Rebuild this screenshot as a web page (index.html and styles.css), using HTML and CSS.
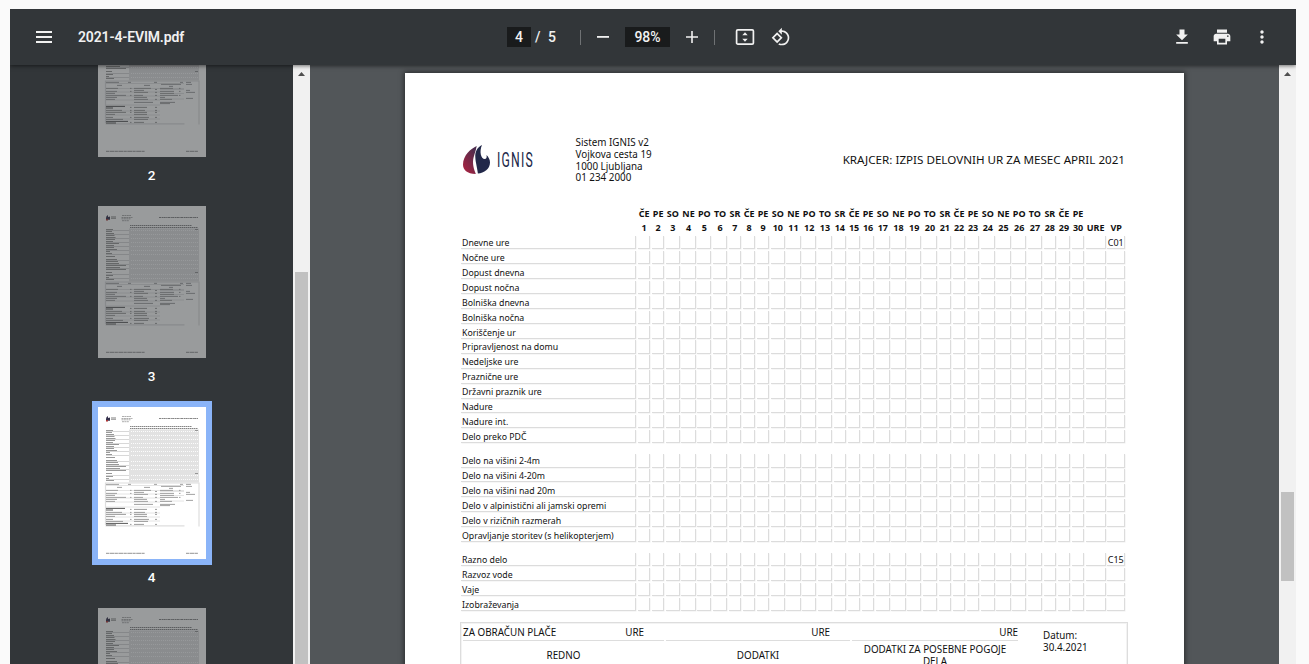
FILE: index.html
```html
<!DOCTYPE html>
<html lang="sl">
<head>
<meta charset="utf-8">
<title>2021-4-EVIM.pdf</title>
<link rel="stylesheet" href="styles.css">
</head>
<body>
<svg class="defs" width="0" height="0">
  <symbol id="mini" viewBox="0 0 108 152">
    <rect width="108" height="152" fill="#fff"/>
    <path d="M8 12q0-2 2-3v2l2-.5v3.2H8z" fill="#35304c"/>
    <path d="M8 13h2v1.500H8z" fill="#a33"/>
    <path d="M13 10.800h5M13 12.400h5" stroke="#aaa" stroke-width="1.200"/>
    <path d="M24 9.500h9M23.500 11.500h11M23.500 12.800h9M24 14.700h7" stroke="#999" stroke-width=".8" stroke-dasharray="2 .4"/>
    <path d="M61 11.500h39" stroke="#777" stroke-width=".9" stroke-dasharray="2.300 .5 1.300 .3"/>
    <path d="M32 19.500h62M32 21.500h68" stroke="#777" stroke-width=".9" stroke-dasharray="1.500 .5"/>
    <rect x="31" y="22.500" width="70" height="53" fill="#e2e2e2"/>
    <path d="M33 24.500h67M33 28.500h67M33 32.500h67M33 36.500h67M33 40.500h67M33 44.500h67M33 48.500h67M33 54.500h67M33 58.500h67M33 62.500h67M33 68.500h67M33 72.500h67" stroke="#fff" stroke-width=".9" stroke-dasharray="1 1"/>
    <path d="M8 24.500h23M8 28.500h23M8 32.500h23M8 36.500h23M8 40.500h23M8 44.500h23M8 48.500h23M8 54.500h23M8 58.500h23M8 62.500h23M8 68.500h23M8 72.500h23" stroke="#d8d8d8" stroke-width="1"/>
    <path d="M8 23.500h7M8 25.500h6M8 27.500h8M8 29.500h8.500M8 31.500h9.500M8 33.500h9M8 35.500h7M8 37.500h13M8 39.500h8M8 41.500h8M8 43.500h11M8 45.500h4M8 47.500h6M8 50.500h9M8 53.500h11M8 55.500h12M8 57.500h13M8 59.500h20M8 61.500h14M8 63.500h20M8 66.500h6M8 69.500h7M8 71.500h3M8 73.500h8M97 23.500h3M97 66.500h3" stroke="#8c8c8c" stroke-width=".9"/>
    <path d="M7.500 118V76h93.500v43.500M7.500 118.900h79" fill="none" stroke="#dedede" stroke-width="1.200"/>
    <path d="M8 78.500h78M8 83.500h78M8 87h54M8 91h54M8 95h54M8 100h54M8 106h54M8 110h54M8 114h54M62 84.500h24M62 88.500h24M62 94h24" stroke="#e4e4e4"/>
    <path d="M8 77.400h13M30 77.400h3M56 77.400h3M82 77.400h3M88 77.400h5M88 79.400h6M19 80.400h5M46 80.400h6M63 79.400h20M71 81.400h4M88 85.400h4M88 87.400h9M88 93.400h7" stroke="#999" stroke-width=".9"/>
    <path d="M8 83.400h12M8 86.400h11M8 88.400h9M8 90.400h20M8 92.400h11M8 94.400h9M36 83.400h17M36 85.400h10M36 87.400h14M36 90.400h9M36 92.400h13M36 94.400h14M36 97.400h19M62 83.400h13M62 86.400h14M62 88.400h14M62 90.400h18M62 92.400h5M62 94.400h12M62 97.400h15M62 98.600h10M32 83.400h1.500M32 86.400h1.500M32 90.400h1.500M57 84.500h2M57 87.400h2M57 90.400h2M57 94.400h2M81 83.400h1.500M81 86.400h1.500M81 90.400h1.500" stroke="#969696" stroke-width=".9"/>
    <path d="M8 101.400h19M8 103h7M8 116.400h22M8 118h10" stroke="#444" stroke-width=".9"/>
    <path d="M8 105.400h16M8 107.400h20M8 109.400h9M8 112.400h7M8 114.400h17M36 102.400h13M36 105.400h11M36 107.400h13M36 109.400h13M36 112.400h15M36 114.400h14M36 117.400h10M32 102.400h1.500M32 105.400h1.500M32 107.400h1.500M32 112.400h1.500M32 117.400h1.500M57 102.400h2M57 105.400h2M57 107.400h2M57 112.400h2M57 117.400h2" stroke="#909090" stroke-width=".9"/>
    <path d="M8 146.300h39M88 146.300h12" stroke="#888" stroke-width=".9" stroke-dasharray="3 .5 5 .4"/>
  </symbol>
</svg>
<div class="viewer">
  <header class="toolbar">
    <div class="tool-left">
      <svg class="icon-menu" width="16" height="12"><path d="M0 0h16v2H0zM0 5h16v2H0zM0 10h16v2H0z"/></svg>
      <span class="filename">2021-4-EVIM.pdf</span>
    </div>
    <div class="tool-center">
      <span class="field page-field">4</span>
      <span class="slash">/</span>
      <span class="total">5</span>
      <span class="divider first"></span>
      <svg class="icon" viewBox="0 0 20 20"><path d="M4 9h12v1.800H4z"/></svg>
      <span class="field zoom-field">98%</span>
      <svg class="icon" viewBox="0 0 20 20"><path d="M9.200 4h1.600v5.200H16v1.600h-5.200V16H9.200v-5.200H4V9.200h5.200z"/></svg>
      <span class="divider second"></span>
      <svg class="icon" viewBox="0 0 20 20"><rect x="1.600" y="2.900" width="16.800" height="14.200" rx="1.200" fill="none" stroke="#f1f1f1" stroke-width="1.700"/><path d="M10 5.200l2.700 3H7.300zM10 14.800l-2.700-3h5.400z"/></svg>
      <svg class="icon rotate" viewBox="0 0 24 24"><path d="M7.340 6.410L.86 12.900l6.490 6.480 6.490-6.480-6.500-6.490zM3.690 12.900l3.660-3.660L11 12.900l-3.660 3.660-3.650-3.660zm15.670-6.260C17.610 4.880 15.300 4 13 4V.76L8.760 5 13 9.240V6c1.790 0 3.580.68 4.950 2.050 2.730 2.730 2.730 7.170 0 9.900C16.580 19.320 14.790 20 13 20c-.97 0-1.940-.21-2.840-.61l-1.490 1.490C10.020 21.620 11.510 22 13 22c2.300 0 4.610-.88 6.360-2.640 3.520-3.510 3.520-9.210 0-12.720z"/></svg>
    </div>
    <div class="tool-right">
      <svg class="icon" viewBox="0 0 24 24"><path d="M19 9h-4V3H9v6H5l7 7 7-7zM5 18v2h14v-2H5z"/></svg>
      <svg class="icon" viewBox="0 0 24 24"><path d="M19 8H5c-1.660 0-3 1.340-3 3v6h4v4h12v-4h4v-6c0-1.660-1.340-3-3-3zm-3 11H8v-5h8v5zm3-7c-.55 0-1-.45-1-1s.45-1 1-1 1 .45 1 1-.45 1-1 1zm-1-9H6v4h12V3z"/></svg>
      <svg class="icon" viewBox="0 0 24 24"><path d="M12 8c1.100 0 2-.9 2-2s-.9-2-2-2-2 .9-2 2 .9 2 2 2zm0 2c-1.100 0-2 .9-2 2s.9 2 2 2 2-.9 2-2-.9-2-2-2zm0 6c-1.100 0-2 .9-2 2s.9 2 2 2 2-.9 2-2-.9-2-2-2z"/></svg>
    </div>
  </header>
  <div class="body">
    <aside class="sidebar">
      <div class="thumbs">
        <div class="thumb"><svg class="mini"><use href="#mini"/></svg><span>2</span></div>
        <div class="thumb"><svg class="mini"><use href="#mini"/></svg><span>3</span></div>
        <div class="thumb active"><svg class="mini"><use href="#mini"/></svg><span>4</span></div>
        <div class="thumb"><svg class="mini"><use href="#mini"/></svg></div>
      </div>
      <div class="scrollbar"><svg width="7" height="4"><path d="M3.500 0L7 4H0z"/></svg><div class="handle side-handle"></div></div>
    </aside>
    <main class="canvas">
      <article class="page">
        <div class="head">
          <svg class="logo" viewBox="0 0 74 32" width="74" height="32">
            <defs><linearGradient id="flame" x1="0" y1="1" x2=".7" y2="0"><stop offset="0" stop-color="#b3223f"/><stop offset="1" stop-color="#4b2c4d"/></linearGradient></defs>
            <path d="M14.700 2C9 4.500 1 11.500 1 20.500c0 5.500 4 9.300 12.800 9.500C10.500 22 10.500 16.500 12 12c.8-3 2-6 2.700-10z" fill="url(#flame)"/>
            <path d="M20 1c-5 2.500-7 7-6.700 12 .3 6 1.500 8 2.600 16.500C22 29 28 25 28 18.500c0-3-1.500-5.500-3.500-7.500.5 2.500 0 4-1.800 4C19 15 17 7.500 20 1z" fill="#222849"/>
            <text x="35" y="23.300" textLength="37" lengthAdjust="spacingAndGlyphs" class="logo-text">IGNIS</text>
          </svg>
          <address>Sistem IGNIS v2<br>Vojkova cesta 19<br>1000 Ljubljana<br>01 234 2000</address>
          <h1>KRAJCER: IZPIS DELOVNIH UR ZA MESEC APRIL 2021</h1>
        </div>
        <div id="sheet"></div>
        <section class="summary">
          <div class="sum-col c1"><div class="sum-head"><span>ZA OBRAČUN PLAČE</span><span>URE</span></div><div class="sum-title">REDNO</div></div>
          <div class="sum-col c2"><div class="sum-head"><span></span><span>URE</span></div><div class="sum-title">DODATKI</div></div>
          <div class="sum-col c3"><div class="sum-head"><span></span><span>URE</span></div><div class="sum-title two">DODATKI ZA POSEBNE POGOJE DELA</div></div>
          <div class="date">Datum:<br>30.4.2021</div>
        </section>
      </article>
      <div class="scrollbar main-scroll"><svg width="7" height="4"><path d="M3.500 0L7 4H0z"/></svg><div class="handle main-handle"></div></div>
    </main>
  </div>
</div>
<script src="sheet.js"></script>
</body>
</html>
```
FILE: sheet.js
```js
const names = ['ČE', 'PE', 'SO', 'NE', 'PO', 'TO', 'SR'];
const widths = [14.2, 13.9, 15.6, 15.7, 15.8, 15.7, 14.17];
const gap = 1.6;
const cols = [];
for (let i = 0; i < 30; i++) cols.push(widths[i % 7]);
cols.push(21.4, 19.7);
const template = '176.200px ' + cols.map(w => (w - gap).toFixed(2) + 'px').join(' ');
const sheet = document.getElementById('sheet');

function grid(className) {
  const g = document.createElement('div');
  g.className = className;
  g.style.gridTemplateColumns = template;
  sheet.appendChild(g);
  return g;
}
function cell(parent, text, className) {
  const c = document.createElement('div');
  c.textContent = text;
  if (className) c.className = className;
  parent.appendChild(c);
}

const head = grid('days');
cell(head, '');
for (let i = 0; i < 32; i++) cell(head, i < 30 ? names[i % 7] : '');
cell(head, '');
for (let i = 0; i < 32; i++) cell(head, i < 30 ? String(i + 1) : ['URE', 'VP'][i - 30]);

const groups = [
  { code: 'C01', rows: ['Dnevne ure', 'Nočne ure', 'Dopust dnevna', 'Dopust nočna', 'Bolniška dnevna', 'Bolniška nočna', 'Koriščenje ur', 'Pripravljenost na domu', 'Nedeljske ure', 'Praznične ure', 'Državni praznik ure', 'Nadure', 'Nadure int.', 'Delo preko PDČ'] },
  { code: '', rows: ['Delo na višini 2-4m', 'Delo na višini 4-20m', 'Delo na višini nad 20m', 'Delo v alpinistični ali jamski opremi', 'Delo v rizičnih razmerah', 'Opravljanje storitev (s helikopterjem)'] },
  { code: 'C15', rows: ['Razno delo', 'Razvoz vode', 'Vaje', 'Izobraževanja'] }
];
for (const group of groups) {
  const g = grid('rows');
  group.rows.forEach((name, r) => {
    cell(g, name, 'cell label');
    for (let i = 0; i < 32; i++) cell(g, r === 0 && i === 31 ? group.code : '', i === 31 ? 'cell code' : 'cell');
  });
}
```
FILE: styles.css
```css
* { box-sizing: border-box; }
body { margin: 0; background: #fafafa; height: 664px; overflow: hidden; font-family: Roboto, sans-serif; }
.defs { position: absolute; }
.viewer { margin: 9px 13px 0 10px; height: 655px; display: flex; flex-direction: column; overflow: hidden; background: #525659; }
.toolbar { height: 56px; flex: none; display: flex; align-items: center; background: #323639; color: #f1f1f1; font-size: 14px; font-weight: 500; box-shadow: 0 1px 4px rgba(0,0,0,.55); z-index: 1; }
.toolbar svg { fill: #f1f1f1; flex: none; }
.icon { width: 20px; height: 20px; }
.tool-left { width: 497px; padding-left: 26px; display: flex; align-items: center; gap: 26px; }
.filename { font-weight: 600; letter-spacing: -.15px; }
.tool-center { display: flex; align-items: center; flex: 1; }
.field { background: #191b1c; height: 20px; line-height: 20px; text-align: center; }
.page-field { width: 24px; }
.zoom-field { width: 45px; margin: 0 12px; }
.slash { margin-left: 4px; width: 13px; }
.total { width: 8px; }
.divider { width: 1px; height: 15px; background: #6f7274; }
.first { margin: 0 12px 0 24px; }
.second { margin: 0 20px 0 12px; }
.rotate { margin-left: 16px; }
.tool-right { display: flex; gap: 20px; padding-right: 24px; }
.body { flex: 1; display: flex; min-height: 0; }
.sidebar { width: 300px; display: flex; justify-content: space-between; background: #323639; overflow: hidden; }
.thumbs { margin: -66px 0 0 82px; }
.thumb { width: 120px; height: 201px; display: flex; flex-direction: column; align-items: center; color: #fff; font-size: 13.500px; font-weight: 500; line-height: 16px; }
.mini { width: 120px; height: 164px; padding: 6px; flex: none; opacity: .5; }
.active .mini { background: #8ab4f8; opacity: 1; }
.thumb span { margin: 4px 1px 0 0; }
.scrollbar { width: 17px; background: #f1f1f1; flex: none; display: flex; flex-direction: column; align-items: center; padding-top: 7px; }
.scrollbar svg { fill: #505050; flex: none; }
.handle { width: 13px; background: #c1c1c1; flex: none; }
.side-handle { margin-top: 196px; height: 392px; }
.main-handle { margin-top: 416px; height: 89px; }
.canvas { flex: 1; display: flex; justify-content: space-between; padding-left: 95px; background: #525659; overflow: hidden; }
.page { margin-top: 8px; width: 779px; height: 1102px; flex: none; background: #fff; padding: 64px 0 0 55px; box-shadow: 0 0 5px 1px rgba(0,0,0,.5); color: #111; font-family: "Noto Sans", sans-serif; }
.head { display: flex; height: 70px; width: 665px; }
.logo { margin: 7px 0 0 2px; flex: none; }
.logo-text { font-family: Roboto, sans-serif; font-size: 20px; font-weight: 400; fill: #222849; letter-spacing: 2px; }
address { margin-left: 39.500px; font-style: normal; font-size: 9.850px; line-height: 11.750px; white-space: nowrap; }
h1 { margin: 14px 0 0 auto; font-size: 11.640px; line-height: 18px; font-weight: 400; white-space: nowrap; }
.days { display: grid; grid-auto-rows: 14px; column-gap: 1.6px; font-size: 9px; font-weight: 700; line-height: 14px; padding-bottom: 1px; height: 29.1px; }
.days div { display: flex; justify-content: center; white-space: nowrap; }
.rows { display: grid; grid-auto-rows: 13.4px; gap: 1.52px 1.6px; margin-bottom: 10.9px; font-size: 8.780px; line-height: 14.600px; }
.cell { border-right: 1px solid #dcdcdc; border-bottom: 1px solid #dcdcdc; box-shadow: .5px .5px 0 #eee; white-space: nowrap; display: flex; justify-content: center; }
.code { font-size: 9px; }
.label { justify-content: flex-start; padding-left: 1px; margin-left: 1px; }
.summary { width: 668px; height: 500px; margin-top: .4px; border: 1px solid #ddd; outline: 1px solid #f3f3f3; outline-offset: -2px; display: flex; font-size: 9.850px; padding-left: 2px; }
.sum-head { height: 18px; border-bottom: 1px solid #ddd; display: flex; justify-content: space-between; line-height: 18px; }
.sum-title { text-align: center; line-height: 12px; padding-top: 8px; }
.two { padding: 2px 10px 0; }
.c1 { width: 201px; }
.c1 .sum-head { padding-right: 20px; }
.c2 { width: 184px; margin-left: 2px; }
.c2 .sum-head { padding-right: 20px; }
.c3 { width: 166px; margin-left: 2px; }
.date { margin: 6px 0 0 25px; line-height: 12px; }
```
